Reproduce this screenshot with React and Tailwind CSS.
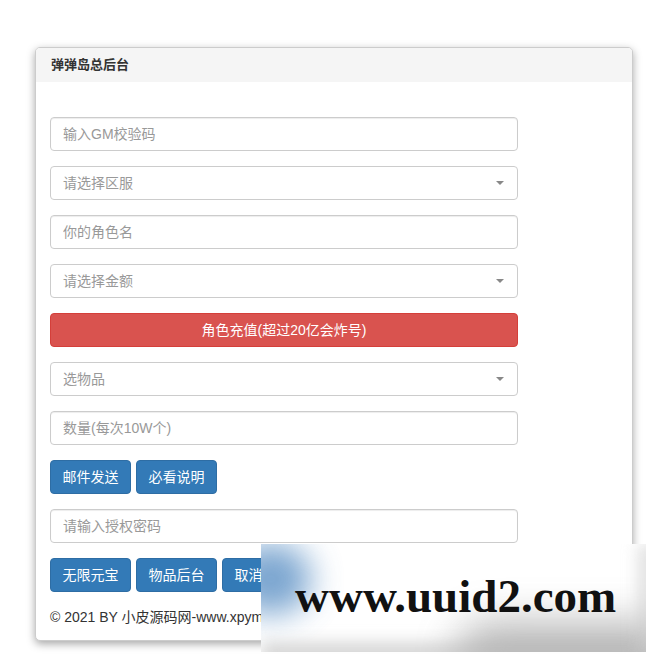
import React from 'react';

const font = { fontFamily: '"Liberation Sans", "Noto Sans CJK SC", sans-serif' };

function TextInput({ placeholder }) {
  return (
    <input
      type="text"
      placeholder={placeholder}
      className="block w-[468px] h-[34px] mb-[15px] px-3 rounded-[4px] border border-[#ccc] bg-white text-[14px] text-[#555] placeholder:text-[#999] shadow-[inset_0_1px_1px_rgba(0,0,0,0.075)] outline-none"
    />
  );
}

function SelectBox({ label }) {
  return (
    <div className="flex items-center justify-between w-[468px] h-[34px] mb-[15px] pl-3 pr-[13px] rounded-[4px] border border-[#ccc] bg-white text-[14px] text-[#999]">
      <span>{label}</span>
      <span className="w-0 h-0 border-l-[4px] border-r-[4px] border-t-[4px] border-l-transparent border-r-transparent border-t-[#888]" />
    </div>
  );
}

function Btn({ children }) {
  return (
    <button className="w-[81px] h-[34px] flex items-center justify-center rounded-[4px] bg-[#337ab7] border border-[#2e6da4] text-white text-[14px]">
      {children}
    </button>
  );
}

export default function App() {
  return (
    <div className="relative w-[651px] h-[657px] bg-white overflow-hidden" style={font}>
      <div className="ml-[35px] mt-[47px] w-[598px] rounded-[5px] border border-[#ccc] bg-white shadow-[0_3px_9px_rgba(0,0,0,0.35)] overflow-hidden">
        <div className="h-[34px] flex items-center px-[15px] bg-[#f5f5f5] text-[13px] font-bold text-[#333]">
          弹弹岛总后台
        </div>
        <div className="pt-[35px] px-[14px] pb-[13px]">
          <TextInput placeholder="输入GM校验码" />
          <SelectBox label="请选择区服" />
          <TextInput placeholder="你的角色名" />
          <SelectBox label="请选择金额" />
          <button className="block w-[468px] h-[34px] mb-[15px] rounded-[4px] bg-[#d9534f] border border-[#d43f3a] text-white text-[14px]">
            角色充值(超过20亿会炸号)
          </button>
          <SelectBox label="选物品" />
          <TextInput placeholder="数量(每次10W个)" />
          <div className="flex gap-[5px] mb-[15px]">
            <Btn>邮件发送</Btn>
            <Btn>必看说明</Btn>
          </div>
          <TextInput placeholder="请输入授权密码" />
          <div className="flex gap-[5px] mb-[15px]">
            <Btn>无限元宝</Btn>
            <Btn>物品后台</Btn>
            <Btn>取消授权</Btn>
          </div>
          <p className="h-[20px] leading-[20px] text-[14px] text-[#333]">
            © 2021 BY 小皮源码网-www.xpymw.com
          </p>
        </div>
      </div>

      {/* watermark stamp laid over the page */}
      <div className="absolute left-[261px] top-[544px] w-[385px] h-[108px] bg-white overflow-hidden">
        <div className="absolute left-[-30px] top-[0px] w-[80px] h-[70px] rounded-full bg-[#5a8fc4] opacity-80 blur-[16px]" />
        <div className="absolute right-[-40px] bottom-[-40px] w-[230px] h-[70px] rounded-full bg-[#9a9a9a] opacity-70 blur-[20px]" />
        <div className="absolute left-0 right-0 bottom-[-14px] h-[24px] bg-[#bbb] opacity-60 blur-[8px]" />
        <div className="absolute right-[-12px] top-0 bottom-0 w-[20px] bg-[#ccc] opacity-60 blur-[8px]" />
        <div
          className="absolute left-[34px] top-[29px] text-[47px] font-bold leading-none text-[#111]"
          style={{ fontFamily: '"Liberation Serif", serif' }}
        >
          www.uuid2.com
        </div>
      </div>
    </div>
  );
}
